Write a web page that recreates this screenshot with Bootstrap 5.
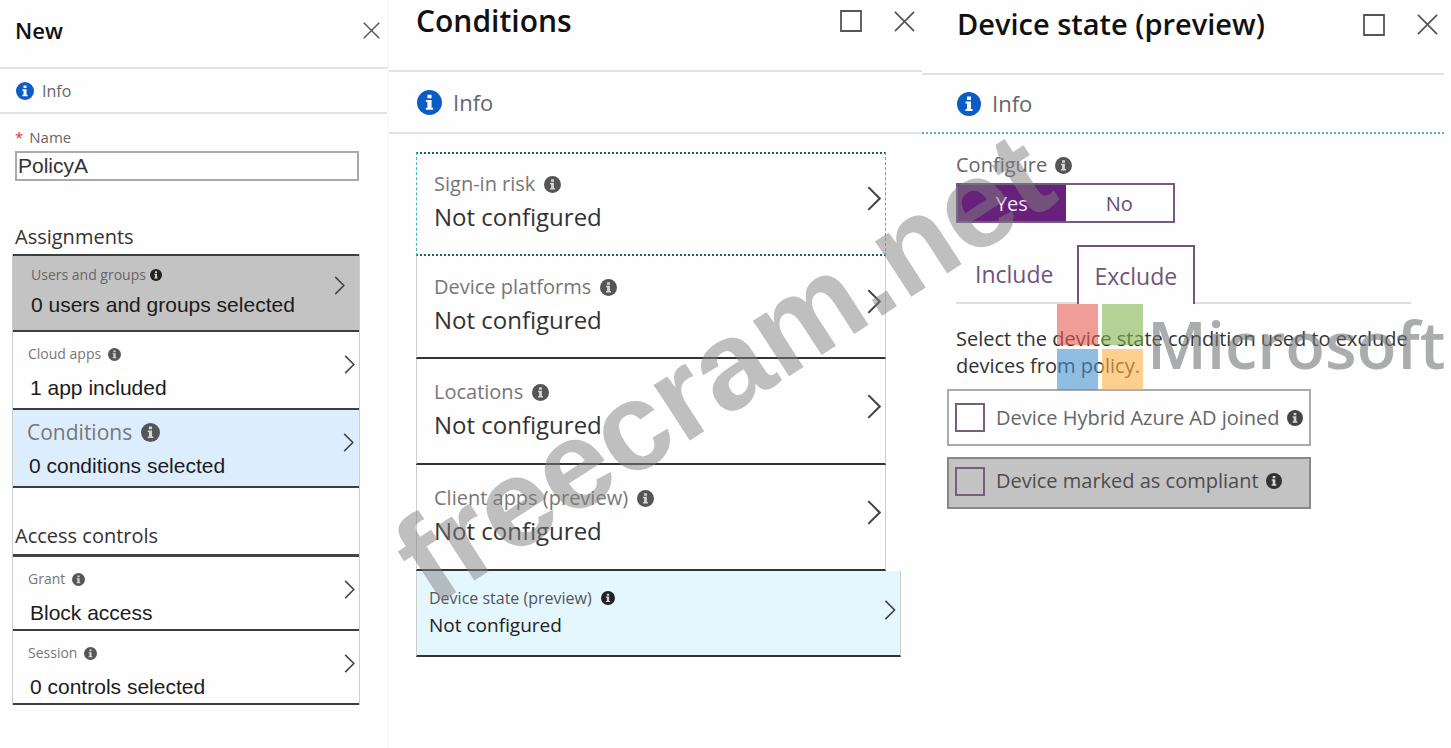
<!DOCTYPE html>
<html lang="en">
<head>
<meta charset="utf-8">
<meta name="viewport" content="width=device-width, initial-scale=1">
<title>New policy - Conditions - Device state</title>
<link rel="stylesheet" href="https://cdn.jsdelivr.net/npm/bootstrap@5.3.0/dist/css/bootstrap.min.css">
<style>
  body { font-family: "Open Sans", "Noto Sans", sans-serif; color: #222; background: #fefefe; overflow-x: hidden; }
  a { color: inherit; text-decoration: none; }
  svg { display: block; flex: none; }

  .blade-new { flex: 387 1 0; border-right: 2px solid #f8f8f8; }
  .blade-cond { flex: 533 1 0; }
  .blade-state { flex: 522 1 0; padding-right: 7px; }

  .blade-head h2 { font-weight: 600; margin: 0; color: #111; }
  .blade-head button { background: none; border: 0; padding: 0; color: #555; }
  .blade-head, .blade-info { border-bottom: 2px solid #e3e3e3; }
  .blade-info { color: #666; }

  .blade-new .blade-head { height: 69px; padding: 0 7px 6px 15px; }
  .blade-new .blade-head h2 { font-size: 22px; }
  .blade-new .blade-info { height: 45px; padding: 0 16px; gap: 8px; font-size: 16px; }
  .blade-cond .blade-head { height: 72px; padding: 0 7px 28px 27px; }
  .blade-cond .blade-info { height: 62px; padding: 0 28px; gap: 11px; font-size: 22px; }
  .blade-state .blade-head { height: 75px; padding: 0 6px 24px 35px; }
  .blade-state .blade-info { height: 59px; padding: 0 35px; gap: 11px; font-size: 22px; border-bottom: 2px dotted #5fb0b4; }
  .title-cond { font-size: 30px; }
  .title-state { font-size: 29px; }

  .name-area { padding: 11px 28px 0 15px; }
  .name-area label { font-size: 15px; line-height: 24px; color: #666; gap: 6px; }
  .name-area input { height: 30px; font: 21px "Liberation Sans", sans-serif; color: #333; border: 2px solid #aaa; padding: 0 1px; border-radius: 0; margin-top: 2px; }
  .group-title { font-size: 20px; line-height: 24px; margin: 0; font-weight: 400; color: #333; }
  .assign-title { padding-top: 44px; }

  .policy-list { margin: 5px 27px 0 12px; border: 1px solid #ccc; border-width: 0 1px; }
  .policy-row { min-height: 78px; border-bottom: 2px solid #3a3f42; padding: 12px 4px 0 15px; color: #777; }
  .policy-row .row-label { font-size: 14px; line-height: 20px; gap: 7px; }
  .policy-row .row-value { font: 21px/28px "Liberation Sans", sans-serif; color: #1c1c1c; margin: 10px 0 0 2px; }
  .policy-row .chev { margin-top: 11px; }
  .policy-row.is-gray { background: #c3c3c3; color: #666; padding: 9px 14px 0 18px; }
  .policy-row.is-gray .row-value { margin: 6px 0 0; }
  .policy-row.is-gray .row-label { gap: 4px; }
  .policy-row.is-blue { background: #dceefe; padding-right: 5px; padding-left: 14px; }
  .policy-row.is-blue .row-label { font-size: 21px; gap: 9px; }
  .policy-row.is-short { min-height: 74px; }
  .first-line { border-top: 2px solid #3a3f42; }
  .access-title { padding: 36px 2px 6px; border-bottom: 3px solid #444; }

  .cond-list { margin: 18px 21px 0 27px; }
  .cond-row { min-height: 103px; margin-right: 15px; border: 1px solid #ccc; border-width: 0 1px 2px; border-bottom-color: #333; padding: 19px 4px 0 17px; color: #777; }
  .cond-row .row-label { font-size: 20px; line-height: 24px; gap: 9px; }
  .cond-row .row-value { font-size: 24px; line-height: 30px; margin-top: 6px; color: #333; }
  .cond-row .chev { margin-top: 14px; }
  .cond-row.is-tall { min-height: 106px; padding-top: 21px; }
  .cond-row.is-focus { min-height: 104px; padding-top: 18px; border: 2px dotted #14606e; border-right: 1px dashed #4cb4c0; border-left: 1px dashed #4cb4c0; }
  .cond-row.is-picked { min-height: 86px; margin-right: 0; background: #e4f6fe; padding: 17px 4px 0 12px; color: #555; }
  .cond-row.is-picked .row-label { font-size: 16px; line-height: 20px; }
  .cond-row.is-picked .row-value { font-size: 19px; line-height: 24px; color: #222; margin-top: 5px; }
  .cond-row.is-picked .chev { margin-top: 12px; }

  .state-body { padding: 19px 33px 0 34px; color: #666; }
  .config-label { font-size: 20px; line-height: 24px; gap: 8px; }
  .yes-no { width: 219px; margin-top: 6px; border: 2px solid #775a80; }
  .yes-no label { flex: 1 1 0; font-size: 20px; line-height: 38px; height: 36px; text-align: center; color: #65506c; cursor: pointer; }
  .yes-no input:checked + label { background: #68217a; color: #f3e6f6; }
  .state-tabs { margin-top: 22px; border-bottom: 2px solid #ddd; }
  .state-tabs button { font-size: 23px; line-height: 30px; height: 59px; background: #fefefe; border: 0; border-radius: 0; padding: 0 17px 2px 19px; color: #70547a; margin-bottom: -2px; }
  .state-tabs .is-open { border: 2px solid #70547a; border-bottom: 0; padding: 0 16px 0 15px; margin-left: 7px; }
  .state-tabs .is-shut { background: none; }
  .state-text { font-size: 20px; line-height: 27px; margin: 21px -8px 10px 0; color: #333; }
  .check-card { width: 364px; max-width: 100%; margin-left: -9px; border: 2px solid #aaa; height: 57px; padding: 0 6px; font-size: 20px; }
  .check-card .form-check-input[type=checkbox] { width: 30px; height: 29px; margin: 0; border: 2px solid #74607c; border-radius: 0; background: transparent; flex: none; }
  .check-card label { margin: 0 7px 0 11px; white-space: nowrap; }
  .check-card.is-gray { background: #c3c3c3; border-color: #888; height: 52px; margin-top: 11px; padding-bottom: 4px; color: #4d4d4d; }

  .overlay { position: absolute; pointer-events: none; overflow: visible; }
  .site-mark { left: 0; top: 0; }
  .brand-mark { left: 133px; top: 304px; }
</style>
</head>
<body>
<svg width="0" height="0" class="position-absolute" aria-hidden="true">
  <symbol id="info" viewBox="0 0 24 24"><circle cx="12" cy="12" r="12" fill="currentColor"/><path d="M10 4.500h4v3.500h-4zM8.500 9.500H14V17h1.500v2h-7v-2H10v-5.500H8.500z" fill="#fff"/></symbol>
  <symbol id="tip" viewBox="0 0 24 24"><circle cx="12" cy="12" r="12" fill="currentColor"/><path d="M10 4.500h4v3.500h-4zM8.500 9.500H14V17h1.500v2h-7v-2H10v-5.500H8.500z" fill="#d5d5d5"/></symbol>
  <symbol id="chevron" viewBox="0 0 12 22"><path d="M1 1l10 10L1 21" fill="none" stroke="#444" stroke-width="1.800"/></symbol>
  <symbol id="close" viewBox="0 0 22 22"><path d="M1 1l20 20M21 1L1 21" fill="none" stroke="currentColor" stroke-width="1.800"/></symbol>
  <symbol id="maximize" viewBox="0 0 22 22"><path d="M1 1h20v20H1z" fill="none" stroke="currentColor" stroke-width="1.800"/></symbol>
</svg>

<main class="d-flex position-relative min-vh-100">
  <section class="blade-new">
    <header class="blade-head d-flex align-items-center justify-content-between">
      <h2>New</h2>
      <button type="button" aria-label="Close"><svg width="17" height="17"><use href="#close"/></svg></button>
    </header>
    <div class="blade-info d-flex align-items-center"><svg width="18" height="18" color="#0b5cc4"><use href="#info"/></svg><span>Info</span></div>
    <div class="name-area">
      <label for="policy" class="d-flex"><span class="text-danger">*</span>Name</label>
      <input id="policy" type="text" value="PolicyA" class="w-100 d-block">
      <h3 class="group-title assign-title">Assignments</h3>
    </div>
    <div class="policy-list">
      <a href="#" class="policy-row is-gray first-line d-flex justify-content-between">
        <span><span class="row-label d-flex align-items-center">Users and groups <svg width="12" height="12" color="#222"><use href="#tip"/></svg></span><span class="row-value d-block">0 users and groups selected</span></span>
        <svg class="chev" width="11" height="19"><use href="#chevron"/></svg>
      </a>
      <a href="#" class="policy-row d-flex justify-content-between">
        <span><span class="row-label d-flex align-items-center">Cloud apps <svg width="13" height="13" color="#555"><use href="#tip"/></svg></span><span class="row-value d-block">1 app included</span></span>
        <svg class="chev" width="11" height="19"><use href="#chevron"/></svg>
      </a>
      <a href="#" class="policy-row is-blue d-flex justify-content-between">
        <span><span class="row-label d-flex align-items-center">Conditions <svg width="19" height="19" color="#555"><use href="#tip"/></svg></span><span class="row-value d-block">0 conditions selected</span></span>
        <svg class="chev" width="11" height="19"><use href="#chevron"/></svg>
      </a>
      <h3 class="group-title access-title">Access controls</h3>
      <a href="#" class="policy-row is-short d-flex justify-content-between">
        <span><span class="row-label d-flex align-items-center">Grant <svg width="13" height="13" color="#555"><use href="#tip"/></svg></span><span class="row-value d-block">Block access</span></span>
        <svg class="chev" width="11" height="19"><use href="#chevron"/></svg>
      </a>
      <a href="#" class="policy-row is-short d-flex justify-content-between">
        <span><span class="row-label d-flex align-items-center">Session <svg width="13" height="13" color="#555"><use href="#tip"/></svg></span><span class="row-value d-block">0 controls selected</span></span>
        <svg class="chev" width="11" height="19"><use href="#chevron"/></svg>
      </a>
    </div>
  </section>

  <section class="blade-cond">
    <header class="blade-head d-flex align-items-center justify-content-between">
      <h2 class="title-cond">Conditions</h2>
      <span class="d-flex gap-4">
        <button type="button" aria-label="Maximize" class="me-2"><svg width="22" height="22"><use href="#maximize"/></svg></button>
        <button type="button" aria-label="Close"><svg width="21" height="21"><use href="#close"/></svg></button>
      </span>
    </header>
    <div class="blade-info d-flex align-items-center"><svg width="25" height="25" color="#0b5cc4"><use href="#info"/></svg><span>Info</span></div>
    <div class="cond-list">
      <a href="#" class="cond-row is-focus d-flex justify-content-between">
        <span><span class="row-label d-flex align-items-center">Sign-in risk <svg width="17" height="17" color="#555"><use href="#tip"/></svg></span><span class="row-value d-block">Not configured</span></span>
        <svg class="chev" width="14" height="25"><use href="#chevron"/></svg>
      </a>
      <a href="#" class="cond-row d-flex justify-content-between">
        <span><span class="row-label d-flex align-items-center">Device platforms <svg width="17" height="17" color="#555"><use href="#tip"/></svg></span><span class="row-value d-block">Not configured</span></span>
        <svg class="chev" width="14" height="25"><use href="#chevron"/></svg>
      </a>
      <a href="#" class="cond-row is-tall d-flex justify-content-between">
        <span><span class="row-label d-flex align-items-center">Locations <svg width="17" height="17" color="#555"><use href="#tip"/></svg></span><span class="row-value d-block">Not configured</span></span>
        <svg class="chev" width="14" height="25"><use href="#chevron"/></svg>
      </a>
      <a href="#" class="cond-row is-tall d-flex justify-content-between">
        <span><span class="row-label d-flex align-items-center">Client apps (preview) <svg width="17" height="17" color="#555"><use href="#tip"/></svg></span><span class="row-value d-block">Not configured</span></span>
        <svg class="chev" width="14" height="25"><use href="#chevron"/></svg>
      </a>
      <a href="#" class="cond-row is-picked d-flex justify-content-between">
        <span><span class="row-label d-flex align-items-center">Device state (preview) <svg width="14" height="14" color="#222"><use href="#tip"/></svg></span><span class="row-value d-block">Not configured</span></span>
        <svg class="chev" width="12" height="20"><use href="#chevron"/></svg>
      </a>
    </div>
  </section>

  <section class="blade-state position-relative">
    <header class="blade-head d-flex align-items-center justify-content-between">
      <h2 class="title-state">Device state (preview)</h2>
      <span class="d-flex gap-4">
        <button type="button" aria-label="Maximize" class="me-2"><svg width="22" height="22"><use href="#maximize"/></svg></button>
        <button type="button" aria-label="Close"><svg width="21" height="21"><use href="#close"/></svg></button>
      </span>
    </header>
    <div class="blade-info d-flex align-items-center"><svg width="24" height="24" color="#0b5cc4"><use href="#info"/></svg><span>Info</span></div>
    <div class="state-body">
      <div class="config-label d-flex align-items-center">Configure <svg width="17" height="17" color="#555"><use href="#tip"/></svg></div>
      <div class="yes-no d-flex" role="group" aria-label="Configure">
        <input class="visually-hidden" type="radio" name="configure" id="yes" checked><label for="yes">Yes</label>
        <input class="visually-hidden" type="radio" name="configure" id="no"><label for="no">No</label>
      </div>
      <div class="state-tabs d-flex" role="tablist">
        <button type="button" role="tab" aria-selected="false" class="is-shut">Include</button>
        <button type="button" role="tab" aria-selected="true" class="is-open">Exclude</button>
      </div>
      <p class="state-text">Select the device state condition used to exclude devices from policy.</p>
      <div class="check-card d-flex align-items-center">
        <input class="form-check-input" type="checkbox" id="hybrid"><label for="hybrid">Device Hybrid Azure AD joined</label><svg width="16" height="16" color="#444"><use href="#tip"/></svg>
      </div>
      <div class="check-card is-gray d-flex align-items-center">
        <input class="form-check-input" type="checkbox" id="compliant"><label for="compliant">Device marked as compliant</label><svg width="16" height="16" color="#333"><use href="#tip"/></svg>
      </div>
    </div>
    <svg class="overlay brand-mark" width="390" height="88" role="img" aria-label="Microsoft">
      <g opacity=".6">
        <path d="M2 0h41v41H2z" fill="#e85c53"/><path d="M47 0h41v41H47z" fill="#80b652"/>
        <path d="M2 45h41v41H2z" fill="#4893d1"/><path d="M47 45h41v41H47z" fill="#ffb145"/>
      </g>
      <text x="92" y="65" font-family="Open Sans" font-weight="600" font-size="65" fill="#737476" fill-opacity=".6">Microsoft</text>
    </svg>
  </section>

  <svg class="overlay site-mark" width="1120" height="660">
    <text transform="translate(432 608) rotate(-33)" font-family="Liberation Sans" font-weight="700" font-size="125" fill="#808080" fill-opacity=".5">freecram.net</text>
  </svg>
</main>
<script src="https://cdn.jsdelivr.net/npm/bootstrap@5.3.0/dist/js/bootstrap.bundle.min.js"></script>
</body>
</html>
